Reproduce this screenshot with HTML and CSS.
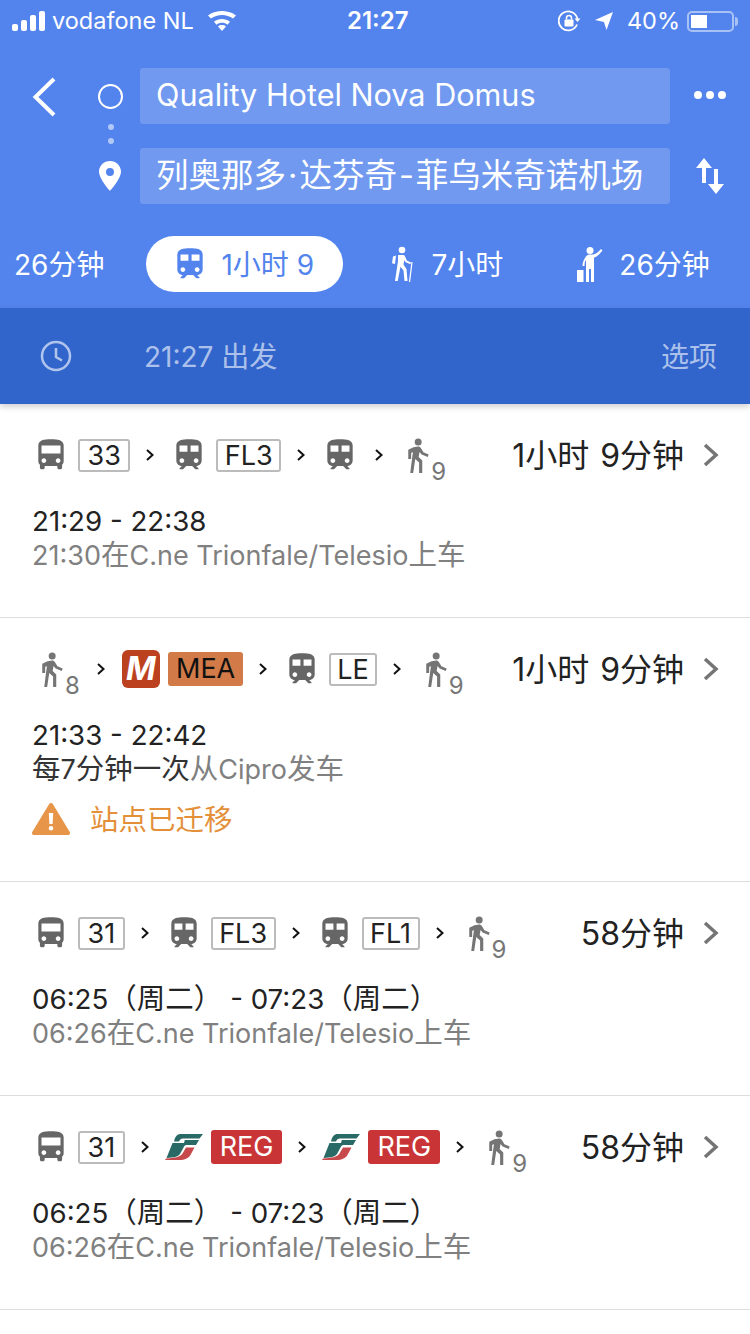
FILE: index.html
```html
<!DOCTYPE html>
<html lang="zh">
<head>
    <meta charset="UTF-8">
    <meta name="viewport" content="width=device-width, initial-scale=1.0">
    <title>Directions</title>
    <link rel="stylesheet" href="styles.css">
</head>
<body>

    <svg class="icon-defs" width="0" height="0">
        <symbol id="i-bus" viewBox="0 0 24 24"><path d="M4 16c0 .88.39 1.67 1 2.22V20c0 .55.45 1 1 1h1c.55 0 1-.45 1-1v-1h8v1c0 .55.45 1 1 1h1c.55 0 1-.45 1-1v-1.78c.61-.55 1-1.34 1-2.22V6c0-3.5-3.58-4-8-4s-8 .5-8 4v10zm3.5 1c-.83 0-1.5-.67-1.5-1.5S6.67 14 7.5 14s1.5.67 1.5 1.5S8.33 17 7.5 17zm9 0c-.83 0-1.5-.67-1.5-1.5s.67-1.5 1.5-1.5 1.5.67 1.5 1.5-.67 1.5-1.5 1.5zm1.5-6H6V6h12v5z"/></symbol>
        <symbol id="i-train" viewBox="0 0 24 24"><path d="M12 2c-4 0-8 .5-8 4v9.500C4 17.430 5.570 19 7.500 19L6 20.500v.5h2.230l2-2H14l2 2h2v-.5L16.500 19c1.930 0 3.500-1.570 3.500-3.500V6c0-3.500-3.580-4-8-4zM7.500 17c-.83 0-1.500-.67-1.500-1.500S6.670 14 7.500 14s1.500.67 1.500 1.500S8.330 17 7.500 17zm3.500-7H6V6h5v4zm2 0V6h5v4h-5zm3.500 7c-.83 0-1.500-.67-1.500-1.500s.67-1.500 1.500-1.500 1.500.67 1.500 1.500-.67 1.500-1.500 1.500z"/></symbol>
        <symbol id="i-walk" viewBox="0 0 24 30"><circle cx="13" cy="3.500" r="3"/><path d="M9 8l4-.8c1 0 1.800.5 2.300 1.300l2.200 3.700 4.500 2-.8 2-5.200-2-1.800-2.300-.8 4.300 3.100 3v10.800h-2.700v-9l-3.300-3-1.800 12H6.200l2.300-18-1.500.8v5.200H4.500V10z"/></symbol>
        <symbol id="i-hiker" viewBox="0 0 24 36"><circle cx="12" cy="4" r="3.300"/><path d="M8 9h5c1 0 1.600.5 2 1.300l1.800 4.200 4.200 2-.7 1.800-5-2.200-1-2-.8 4.500 3 4.400 1 12h-3l-1-10.500-3-3.800-2.800 14.300H5l3-20zM6 9.500l-1 8.500-3-.8L3 10.500z"/><path d="M22 16l-2.500 20" fill="none" stroke="#fff" stroke-width="1.200"/></symbol>
        <symbol id="i-hail" viewBox="0 0 28 36"><circle cx="13" cy="4.500" r="3.500"/><path d="M8 12c1-2.500 3-3.500 6-3.500 3 0 5-.5 7-2.500l3-3 1.500 1.500-3.500 4c-1.500 1.500-3.500 3-5 3V36h-3V23h-2v13H9V14c-1 1-1.500 3-1.500 6H5.500c0-3 1-6 2.500-8z"/><rect x="0" y="24" width="6.500" height="12"/></symbol>
        <symbol id="i-fs" viewBox="0 0 38 26">
            <path fill="#2a6a66" d="M9 7.500C10 2.500 12 0 16 0h22l-3.500 4.500H18c-2 0-3.200 1-4 3z"/>
            <path fill="#2a6a66" d="M7.500 9H19l.8-3H34l-3 5h-9c-1.500 0-2.500.6-3.200 2L15 20c-1.500 2.500-5 3.500-13.500 4z"/>
            <path fill="#c8494c" d="M0 26l1-1.500c9-.5 14-1.500 16.500-5L21 13.500h8.500L26 20c-2 4-6 6-12 6z"/>
        </symbol>
    </svg>

    <header class="top">
        <div class="status-bar">
            <div class="status-left">
                <span class="signal"><i></i><i></i><i></i><i></i></span>
                <span class="carrier">vodafone NL</span>
                <svg class="wifi" width="28" height="20" viewBox="0 0 28 20" fill="#fff">
                    <path d="M14 20l-4-4.600c2.300-1.900 5.700-1.900 8 0z"/>
                    <path d="M8.500 13.700L6 10.800c4.600-3.700 11.400-3.700 16 0l-2.500 2.900c-3.200-2.500-7.800-2.500-11 0z"/>
                    <path d="M3 7.600L0 4.400C8-1.500 20-1.500 28 4.400l-3 3.200C18.500 2.800 9.500 2.800 3 7.600z"/>
                </svg>
            </div>
            <span class="clock-time">21:27</span>
            <div class="status-right">
                <svg class="rotlock" width="24" height="22" viewBox="0 0 24 22">
                    <path d="M19 14.500A9.500 9.500 0 1 1 19.500 9" fill="none" stroke="#fff" stroke-width="1.800"/>
                    <path d="M16.500 8.500h6l-3 3.500z" fill="#fff"/>
                    <rect x="6.500" y="9.500" width="9" height="7" rx="1" fill="#fff"/>
                    <path d="M8.500 9.500V8a2.500 2.500 0 0 1 5 0v1.500" fill="none" stroke="#fff" stroke-width="1.500"/>
                </svg>
                <svg class="locarrow" width="18" height="18" viewBox="0 0 18 18"><path d="M18 0L11.500 18 9 10 0 8z" fill="#fff"/></svg>
                <span class="battery-pct">40%</span>
                <span class="battery"><i></i></span>
            </div>
        </div>

        <div class="search">
            <svg class="back" width="24" height="40" viewBox="0 0 24 40"><path d="M22 2L3.500 20 22 38" fill="none" stroke="#fff" stroke-width="4"/></svg>
            <div class="markers">
                <span class="origin"></span>
                <span class="dot"></span>
                <span class="dot"></span>
                <svg class="pin" width="22" height="30" viewBox="0 0 22 30"><path fill-rule="evenodd" d="M11 0c6 0 11 4.700 11 10.600C22 18 11 30 11 30S0 18 0 10.600C0 4.700 5 0 11 0zm0 7a4 4 0 1 0 0 8 4 4 0 0 0 0-8z" fill="#fff"/></svg>
            </div>
            <div class="fields">
                <div class="field">Quality Hotel Nova Domus</div>
                <div class="field field-cjk">列奥那多<span class="field-sep">·</span>达芬奇<span class="field-sep">-</span>菲乌米奇诺机场</div>
            </div>
            <div class="search-actions">
                <span class="more"><i></i><i></i><i></i></span>
                <svg class="swap" width="28" height="36" viewBox="0 0 28 36" fill="#fff"><path d="M8 0l8 10h-6v15H6V10H0z"/><path d="M20 36l-8-10h6V11h4v15h6z"/></svg>
            </div>
        </div>

        <nav class="modes">
            <div class="mode mode-car"><span>26分钟</span></div>
            <div class="mode mode-active">
                <svg class="mode-icon"><use href="#i-train"/></svg>
                <span>1小时 9</span>
            </div>
            <div class="mode mode-walk">
                <svg class="hiker"><use href="#i-hiker"/></svg>
                <span>7小时</span>
            </div>
            <div class="mode mode-hail">
                <svg class="hail"><use href="#i-hail"/></svg>
                <span>26分钟</span>
            </div>
        </nav>
    </header>

    <div class="depart-bar">
        <svg class="clock" width="32" height="32" viewBox="0 0 32 32"><circle cx="16" cy="16" r="14" fill="none" stroke="currentColor" stroke-width="2.500"/><path d="M16 8v9l6 3.500" fill="none" stroke="currentColor" stroke-width="2.500"/></svg>
        <span class="depart-time">21:27 出发</span>
        <span class="options">选项</span>
    </div>

    <main class="routes">
        <section class="route">
            <div class="route-top">
                <div class="legs">
                    <svg class="leg-icon"><use href="#i-bus"/></svg>
                    <span class="badge">33</span>
                    <svg class="sep" viewBox="0 0 8 12"><path d="M1 1l5.500 5L1 11"/></svg>
                    <svg class="leg-icon"><use href="#i-train"/></svg>
                    <span class="badge badge-fl">FL3</span>
                    <svg class="sep" viewBox="0 0 8 12"><path d="M1 1l5.500 5L1 11"/></svg>
                    <svg class="leg-icon"><use href="#i-train"/></svg>
                    <svg class="sep sep-last" viewBox="0 0 8 12"><path d="M1 1l5.500 5L1 11"/></svg>
                    <span class="walk"><svg class="walk-icon"><use href="#i-walk"/></svg><b>9</b></span>
                </div>
                <div class="duration">1小时 9分钟</div>
                <svg class="go" viewBox="0 0 16 24"><path d="M2 2l11 10L2 22"/></svg>
            </div>
            <p class="times">21:29 - 22:38</p>
            <p class="note">21:30<span class="cjk">在</span>C.ne Trionfale/Telesio<span class="cjk">上车</span></p>
        </section>

        <section class="route">
            <div class="route-top">
                <div class="legs legs-walkfirst">
                    <span class="walk"><svg class="walk-icon"><use href="#i-walk"/></svg><b>8</b></span>
                    <svg class="sep" viewBox="0 0 8 12"><path d="M1 1l5.500 5L1 11"/></svg>
                    <span class="metro-logo">M</span>
                    <span class="badge badge-mea">MEA</span>
                    <svg class="sep" viewBox="0 0 8 12"><path d="M1 1l5.500 5L1 11"/></svg>
                    <svg class="leg-icon"><use href="#i-train"/></svg>
                    <span class="badge badge-le">LE</span>
                    <svg class="sep sep-last" viewBox="0 0 8 12"><path d="M1 1l5.500 5L1 11"/></svg>
                    <span class="walk"><svg class="walk-icon"><use href="#i-walk"/></svg><b>9</b></span>
                </div>
                <div class="duration">1小时 9分钟</div>
                <svg class="go" viewBox="0 0 16 24"><path d="M2 2l11 10L2 22"/></svg>
            </div>
            <p class="times">21:33 - 22:42</p>
            <p class="note"><span class="note-dark cjk">每</span><span class="note-dark">7</span><span class="note-dark cjk">分钟一次</span><span class="cjk">从</span>Cipro<span class="cjk">发车</span></p>
            <div class="alert">
                <svg class="alert-icon" width="38" height="32" viewBox="0 0 38 32"><path fill-rule="evenodd" d="M19 0c.8 0 1.400.4 1.800 1l17 28c.7 1.300-.1 3-1.800 3H2c-1.700 0-2.500-1.700-1.800-3l17-28c.4-.6 1-1 1.800-1zm-2.200 10l.6 11h3.200l.6-11zM19 23a2.300 2.300 0 1 0 0 4.600 2.300 2.300 0 0 0 0-4.600z" fill="#e79548"/></svg>
                <span class="alert-text">站点已迁移</span>
            </div>
        </section>

        <section class="route">
            <div class="route-top">
                <div class="legs">
                    <svg class="leg-icon"><use href="#i-bus"/></svg>
                    <span class="badge">31</span>
                    <svg class="sep" viewBox="0 0 8 12"><path d="M1 1l5.500 5L1 11"/></svg>
                    <svg class="leg-icon"><use href="#i-train"/></svg>
                    <span class="badge badge-fl">FL3</span>
                    <svg class="sep" viewBox="0 0 8 12"><path d="M1 1l5.500 5L1 11"/></svg>
                    <svg class="leg-icon"><use href="#i-train"/></svg>
                    <span class="badge badge-fl">FL1</span>
                    <svg class="sep sep-last" viewBox="0 0 8 12"><path d="M1 1l5.500 5L1 11"/></svg>
                    <span class="walk"><svg class="walk-icon"><use href="#i-walk"/></svg><b>9</b></span>
                </div>
                <div class="duration">58分钟</div>
                <svg class="go" viewBox="0 0 16 24"><path d="M2 2l11 10L2 22"/></svg>
            </div>
            <p class="times">06:25<span class="cjk">（周二）</span> - 07:23<span class="cjk">（周二）</span></p>
            <p class="note">06:26<span class="cjk">在</span>C.ne Trionfale/Telesio<span class="cjk">上车</span></p>
        </section>

        <section class="route">
            <div class="route-top">
                <div class="legs">
                    <svg class="leg-icon"><use href="#i-bus"/></svg>
                    <span class="badge">31</span>
                    <svg class="sep" viewBox="0 0 8 12"><path d="M1 1l5.500 5L1 11"/></svg>
                    <svg class="fs-logo"><use href="#i-fs"/></svg>
                    <span class="badge badge-reg">REG</span>
                    <svg class="sep" viewBox="0 0 8 12"><path d="M1 1l5.500 5L1 11"/></svg>
                    <svg class="fs-logo"><use href="#i-fs"/></svg>
                    <span class="badge badge-reg">REG</span>
                    <svg class="sep sep-last" viewBox="0 0 8 12"><path d="M1 1l5.500 5L1 11"/></svg>
                    <span class="walk"><svg class="walk-icon"><use href="#i-walk"/></svg><b>9</b></span>
                </div>
                <div class="duration">58分钟</div>
                <svg class="go" viewBox="0 0 16 24"><path d="M2 2l11 10L2 22"/></svg>
            </div>
            <p class="times">06:25<span class="cjk">（周二）</span> - 07:23<span class="cjk">（周二）</span></p>
            <p class="note">06:26<span class="cjk">在</span>C.ne Trionfale/Telesio<span class="cjk">上车</span></p>
        </section>
    </main>

</body>
</html>
```

FILE: styles.css
```css
* {
    box-sizing: border-box;
}
html, body {
    margin: 0;
    padding: 0;
}
body {
    width: 750px;
    height: 1334px;
    overflow: hidden;
    background-color: #fff;
    font-family: Inter, "Noto Sans CJK SC", sans-serif;
    color: #222;
}
.icon-defs {
    position: absolute;
}

/* blue header */
.top {
    height: 308px;
    background-color: #5384ed;
    color: #fff;
}
.status-bar {
    height: 68px;
    padding: 0 12px;
    display: flex;
    justify-content: space-between;
    align-items: flex-start;
    font-size: 23.500px;
    line-height: 42px;
    position: relative;
}
.status-left {
    display: flex;
    align-items: center;
    height: 42px;
}
.signal {
    display: flex;
    align-items: flex-end;
    gap: 3px;
    height: 20px;
    margin-top: -1px;
}
.signal i {
    width: 6px;
    background-color: #fff;
    border-radius: 2px;
}
.signal i:nth-child(1) { height: 7px; }
.signal i:nth-child(2) { height: 11px; }
.signal i:nth-child(3) { height: 16px; }
.signal i:nth-child(4) { height: 20px; }
.carrier {
    margin-left: 7px;
}
.wifi {
    margin-left: 14px;
}
.clock-time {
    position: absolute;
    left: 347px;
    top: 0;
    font-size: 24px;
    font-weight: 600;
}
.status-right {
    display: flex;
    align-items: center;
    height: 42px;
}
.rotlock {
    margin-right: 13px;
}
.locarrow {
    margin-right: 14px;
}
.battery {
    width: 47px;
    height: 21px;
    margin-left: 7px;
    margin-right: 4px;
    padding: 2px;
    border: 2px solid rgba(255, 255, 255, 0.5);
    border-radius: 5px;
    position: relative;
}
.battery i {
    display: block;
    width: 16px;
    height: 13px;
    background-color: #fff;
}
.battery::after {
    content: "";
    position: absolute;
    right: -6px;
    top: 4px;
    width: 3px;
    height: 9px;
    background-color: rgba(255, 255, 255, 0.5);
    border-radius: 0 3px 3px 0;
}

.search {
    display: flex;
    height: 136px;
}
.back {
    margin: 9px 0 0 32px;
}
.markers {
    width: 84px;
    display: flex;
    flex-direction: column;
    align-items: center;
    padding-top: 16px;
    padding-left: 24px;
    flex-shrink: 0;
}
.origin {
    width: 25px;
    height: 25px;
    border: 2px solid #fff;
    border-radius: 50%;
}
.dot {
    width: 6px;
    height: 6px;
    margin-top: 8px;
    margin-left: 1px;
    border-radius: 50%;
    background-color: rgba(255, 255, 255, 0.55);
}
.origin + .dot {
    margin-top: 15px;
}
.pin {
    margin-top: 17px;
}
.fields {
    width: 530px;
    display: flex;
    flex-direction: column;
    gap: 24px;
}
.field {
    height: 56px;
    padding-left: 16px;
    background-color: #7099ef;
    border-radius: 3px;
    font-size: 30.600px;
    line-height: 54px;
    white-space: nowrap;
}
.field-cjk {
    font-size: 32.500px;
    line-height: 56px;
}
.field-sep {
    margin: 0 2px;
}
.search-actions {
    flex: 1;
    display: flex;
    flex-direction: column;
    align-items: center;
}
.more {
    display: flex;
    gap: 4px;
    margin: 23px 0 0 0;
    height: 10px;
}
.more i {
    width: 8px;
    height: 8px;
    border-radius: 50%;
    background-color: #fff;
}
.swap {
    margin-top: 57px;
}

.modes {
    display: flex;
    align-items: center;
    height: 56px;
    margin-top: 32px;
    font-size: 28px;
    white-space: nowrap;
}
.mode {
    display: flex;
    align-items: center;
}
.mode span {
    padding-bottom: 2px;
}
.mode-car {
    margin-left: 14px;
}
.mode-active {
    margin-left: 42px;
    width: 197px;
    height: 56px;
    padding-left: 25px;
    background-color: #fff;
    border-radius: 28px;
    color: #5384ed;
}
.mode-icon {
    width: 38px;
    height: 38px;
    fill: #5384ed;
    margin-right: 12px;
}
.mode-walk {
    margin-left: 47px;
}
.hiker {
    width: 24px;
    height: 36px;
    fill: #fff;
    margin-right: 17px;
}
.mode-hail {
    margin-left: 74px;
}
.hail {
    width: 28px;
    height: 36px;
    fill: #fff;
    margin-right: 14px;
}

/* departure bar */
.depart-bar {
    height: 96px;
    display: flex;
    align-items: center;
    background-color: #3165cc;
    color: rgba(255, 255, 255, 0.62);
    font-size: 28px;
    box-shadow: 0 3px 6px rgba(0, 0, 0, 0.18);
    position: relative;
}
.clock {
    margin-left: 40px;
}
.depart-time {
    margin-left: 72px;
    padding-bottom: 3px;
}
.options {
    margin-left: auto;
    margin-right: 33px;
    padding-bottom: 2px;
}

/* route list */
.route {
    padding: 34px 0 45px 32px;
    border-bottom: 1px solid #ddd;
}
.route-top {
    display: flex;
    align-items: center;
    height: 34px;
    padding-right: 31px;
}
.legs {
    display: flex;
    align-items: center;
    flex: 1;
}
.legs-walkfirst {
    margin-left: 5px;
}
.leg-icon {
    width: 38px;
    height: 38px;
    fill: #666;
    flex-shrink: 0;
}
.badge {
    height: 33px;
    margin-left: 8px;
    padding: 0 7.500px;
    border: 2px solid #bbb;
    border-radius: 3px;
    font-size: 27px;
    line-height: 30px;
    white-space: nowrap;
}
.badge-fl {
    padding: 0 6.500px;
}
.badge-le {
    padding: 0 6px;
}
.badge-mea {
    height: 34px;
    padding: 0 8px;
    border: none;
    background-color: #d27b48;
    color: #111;
    line-height: 34px;
}
.badge-reg {
    height: 34px;
    padding: 0 9px;
    border: none;
    background-color: #c93537;
    color: #fff;
    line-height: 34px;
}
.sep {
    width: 8px;
    height: 12px;
    margin: 0 16px;
    fill: none;
    stroke: #111;
    stroke-width: 2;
    flex-shrink: 0;
}
.sep-last {
    margin-right: 20px;
}
.walk {
    display: flex;
    align-items: center;
    position: relative;
    width: 44px;
    color: #777;
}
.walk-icon {
    width: 28px;
    height: 35px;
    fill: #757575;
}
.walk b {
    font-weight: 400;
    font-size: 24px;
    line-height: 24px;
    position: absolute;
    left: 28px;
    top: 22px;
}
.metro-logo {
    width: 38px;
    height: 38px;
    margin-left: 1px;
    border-radius: 6px;
    background-color: #bc411f;
    color: #fff;
    font-size: 32px;
    font-weight: 700;
    font-style: italic;
    line-height: 38px;
    text-align: center;
}
.fs-logo {
    width: 38px;
    height: 26px;
    flex-shrink: 0;
}
.duration {
    padding-bottom: 4px;
    font-size: 32px;
    word-spacing: 2px;
    white-space: nowrap;
    color: #222;
}
.go {
    width: 16px;
    height: 24px;
    margin-left: 19px;
    fill: none;
    stroke: #757575;
    stroke-width: 3.500;
}
.times,
.note {
    height: 34px;
    margin: 0;
    line-height: 34px;
}
.times {
    margin-top: 32px;
    font-size: 27.700px;
}
.note {
    font-size: 27px;
    line-height: 36px;
    color: #808080;
}
.cjk {
    font-size: 28.500px;
    line-height: 1;
}
.note-dark {
    color: #333;
}
.alert {
    display: flex;
    align-items: center;
    height: 34px;
    margin-top: 16px;
    color: #e48f3a;
    font-size: 28.500px;
}
.alert-icon {
    margin-right: 20px;
}
.alert-text {
    padding-bottom: 4px;
}
```
